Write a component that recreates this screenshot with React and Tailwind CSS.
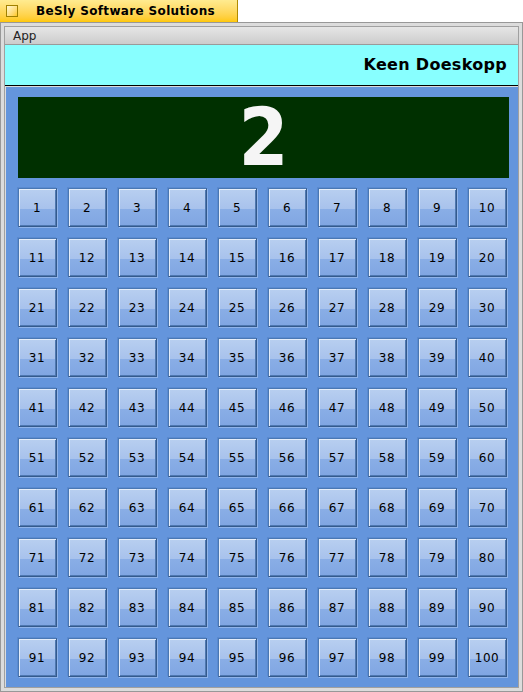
const nums = Array.from({ length: 100 }, (_, i) => i + 1);

export default function App() {
  return (
    <div className="w-[523px] h-[692px] overflow-hidden bg-white flex flex-col font-['DejaVu_Sans',sans-serif]">
      <div className="w-[238px] h-[22px] shrink-0 flex items-center border-r border-[#b08a00] bg-gradient-to-b from-[#ffeb90] to-[#ffc800] pl-[2px]">
        <div className="w-[12px] h-[12px] ml-[4px] border border-[#a08000] bg-gradient-to-br from-[#fff8d0] to-[#ffc800]" />
        <span className="ml-[18px] text-[12px] font-bold tracking-[0.35px] text-black">BeSly Software Solutions</span>
      </div>
      <div className="flex-1 min-h-0 bg-[#dcdcdc] border border-[#989898] p-[3px] flex flex-col">
        <div className="flex-1 min-h-0 border border-[#a0a0a0] flex flex-col">
          <div className="h-[18px] shrink-0 bg-gradient-to-b from-[#e6e6e6] to-[#cccccc] border-b border-[#9a9a9a] flex items-center pl-[8px] text-[12px] text-[#222]">App</div>
          <div className="h-[41px] shrink-0 bg-[#88ffff] border-b border-black flex items-center justify-end pr-[11px] text-[16px] font-bold tracking-[0.3px] text-black">Keen Doeskopp</div>
          <div className="flex-1 min-h-0 mt-[1px] ml-[1px] bg-[#6495dc] pl-[12px] pt-[10px]">
            <div className="w-[491px] h-[81px] bg-[#003000] flex items-center justify-center font-['DejaVu_Sans_Condensed','DejaVu_Sans',sans-serif] text-[80px] font-bold leading-none text-[#f5f5f5]">2</div>
            <div className="mt-[10px] grid grid-cols-[repeat(10,39px)] gap-[11px]">
              {nums.map((n) => (
                <button
                  key={n}
                  className="w-[39px] h-[39px] pr-[1px] border border-t-[#4a78b4] border-l-[#4a78b4] border-r-[#345a8c] border-b-[#345a8c] shadow-[1px_1px_0_#90b4ea,-1px_-1px_0_#5a8ad0,inset_1px_1px_0_#e4edfa,inset_-1px_-1px_0_#4f78b0] bg-[linear-gradient(to_bottom,#b8cff0_0%,#a8c2ec_53%,#8aaee6_53%,#80a6e2_100%)] flex items-center justify-center text-[12px] tracking-[0.5px] text-black"
                >
                  {n}
                </button>
              ))}
            </div>
          </div>
        </div>
      </div>
    </div>
  );
}
